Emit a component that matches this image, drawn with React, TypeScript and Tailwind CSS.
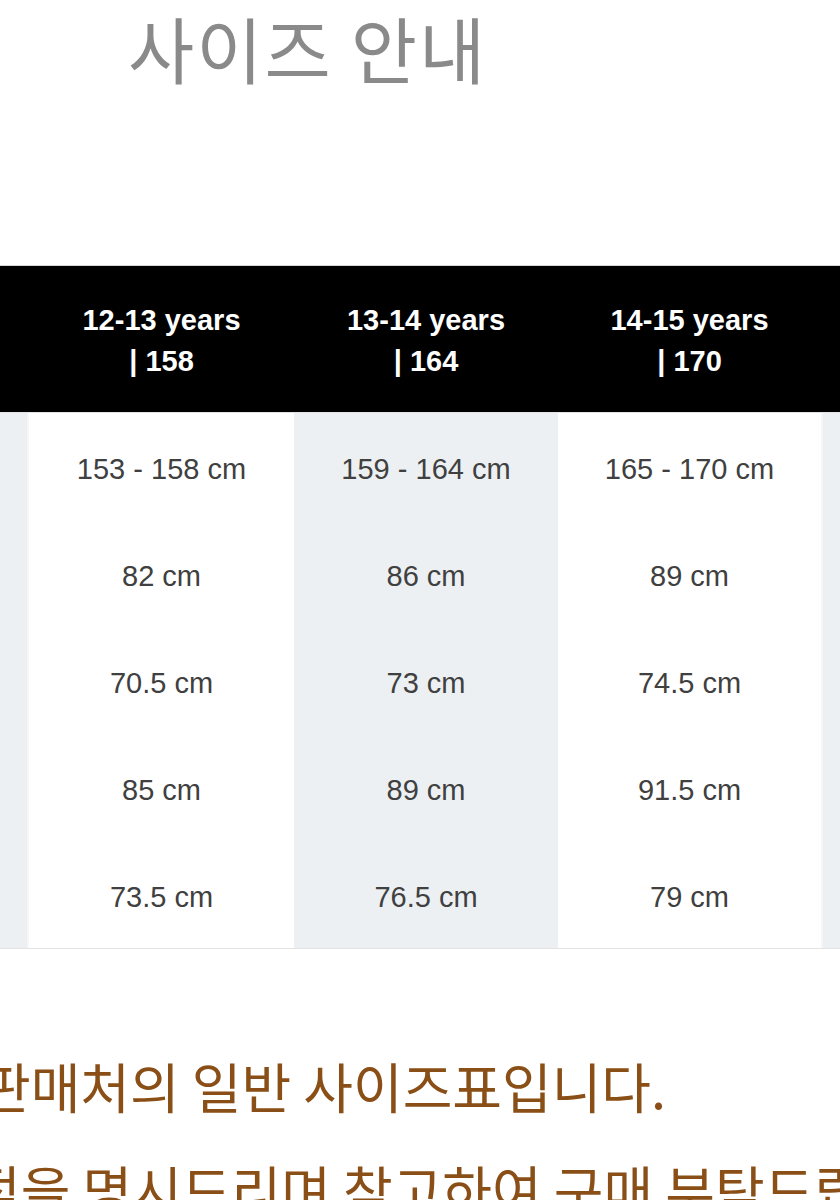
const columns = [
  {
    label: "12-13 years",
    height: "158",
    values: ["153 - 158 cm", "82 cm", "70.5 cm", "85 cm", "73.5 cm"],
    bg: "bg-white",
    width: "w-[265px]",
  },
  {
    label: "13-14 years",
    height: "164",
    values: ["159 - 164 cm", "86 cm", "73 cm", "89 cm", "76.5 cm"],
    bg: "bg-[#ecf0f3]",
    width: "w-[264px]",
  },
  {
    label: "14-15 years",
    height: "170",
    values: ["165 - 170 cm", "89 cm", "74.5 cm", "91.5 cm", "79 cm"],
    bg: "bg-white",
    width: "w-[263px]",
  },
];

export default function App() {
  return (
    <main className="w-[840px] h-[1200px] overflow-hidden bg-white font-['Noto_Sans_CJK_KR',sans-serif]">
      {/* Title */}
      <h1 className="pl-[128px] pt-[11px] text-[72px] leading-none tracking-[2px] font-normal text-[#8a8a8a]">사이즈 안내</h1>

      {/* Size table */}
      <section className="mt-[182px] font-['Liberation_Sans',sans-serif]">
        <div className="flex h-[147px] bg-black border-t border-[#d8d8d8]">
          <div className="w-[29px] shrink-0" />
          {columns.map((col) => (
            <div
              key={col.label}
              className={`${col.width} shrink-0 flex flex-col items-center justify-center pt-[4px] text-[29px] leading-[41px] font-bold text-white`}
            >
              <span>{col.label}</span>
              <span>| {col.height}</span>
            </div>
          ))}
          <div className="flex-1" />
        </div>

        <div className="flex border-t border-[#e4e4e4] border-b">
          <div className="w-[29px] shrink-0 bg-[#ecf0f3] border-r-2 border-[#f4f6f8]" />
          {columns.map((col) => (
            <div key={col.label} className={`${col.width} shrink-0 ${col.bg} flex flex-col`}>
              {col.values.map((v, i) => (
                <div
                  key={i}
                  className="h-[107px] pt-[6px] flex items-center justify-center text-[29px] leading-[1.2] text-[#404040]"
                >
                  {v}
                </div>
              ))}
            </div>
          ))}
          <div className="flex-1 bg-[#ecf0f3] border-l-2 border-[#f4f6f8]" />
        </div>
      </section>

      {/* Notes */}
      <div className="mt-[110px] text-[54px] leading-none text-[#8a4f17] whitespace-nowrap">
        <p className="ml-[-19px]">판매처의 일반 사이즈표입니다.</p>
        <p className="ml-[-29px] mt-[49px]">점을 명시드리며 참고하여 구매 부탁드립니다.</p>
      </div>
    </main>
  );
}
